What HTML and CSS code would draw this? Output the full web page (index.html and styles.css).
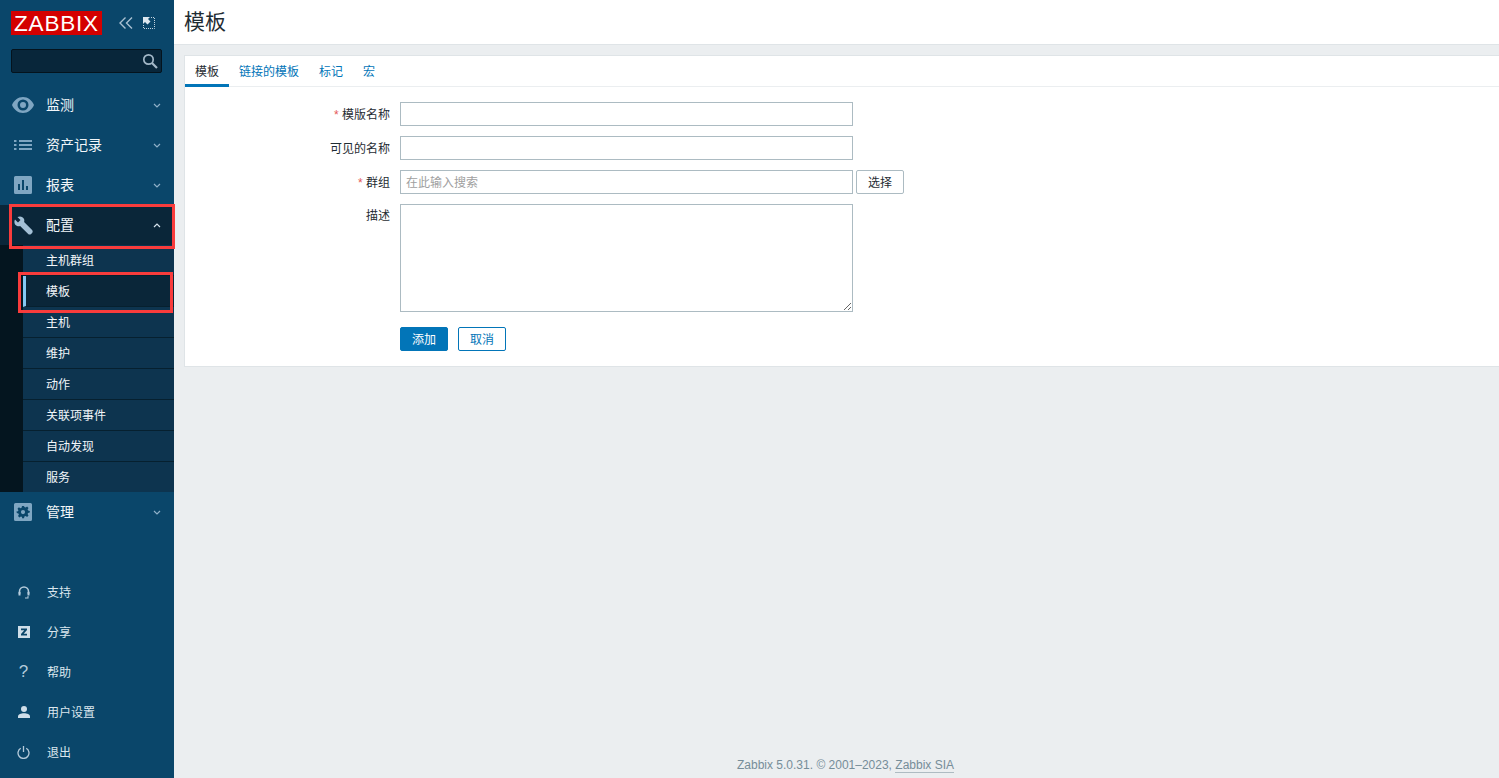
FILE: index.html
```html
<!DOCTYPE html>
<html lang="zh-CN">
<head>
<meta charset="utf-8">
<title>模板</title>
<link rel="stylesheet" href="styles.css">
</head>
<body>
<div class="app">
  <aside class="sidebar">
    <div class="brand">
      <span class="logo">ZABBIX</span>
      <svg class="ctl" width="14" height="12" viewBox="0 0 14 12"><path d="M6.500 .5 L1 6 L6.500 11.500 M13 .5 L7.500 6 L13 11.500" fill="none" stroke="#a9c0d2" stroke-width="1.400"/></svg>
      <svg class="ctl ctl2" width="12" height="12" viewBox="0 0 12 12"><path d="M0 0h7L5 2l2.500 2.500-3 3L2 5 0 7z" fill="#dde8f0"/><path d="M8 .5h3.500v11H.5V8" fill="none" stroke="#c3d4e0" stroke-dasharray="1 1"/></svg>
    </div>
    <div class="search">
      <svg width="16" height="16" viewBox="0 0 16 16"><circle cx="6.500" cy="6.500" r="4.700" fill="none" stroke="#a3b8c8" stroke-width="1.700"/><path d="M10 10l5 5" stroke="#a3b8c8" stroke-width="2.200"/></svg>
    </div>
    <nav class="menu">
      <a class="item">
        <span class="ico"><svg width="22" height="16" viewBox="0 0 22 16"><path fill-rule="evenodd" d="M11 0C6 0 2 3.300 0 8c2 4.700 6 8 11 8s9-3.300 11-8c-2-4.700-6-8-11-8zm0 2.500a5.500 5.500 0 1 1 0 11 5.500 5.500 0 0 1 0-11zm0 2.500a3 3 0 1 0 0 6 3 3 0 0 0 0-6z" fill="#7fa6c2"/></svg></span>
        <span class="lbl">监测</span><svg class="chev" width="8" height="5" viewBox="0 0 8 5"><path d="M1 1l3 3 3-3" fill="none" stroke="#8fb0c8" stroke-width="1.200"/></svg>
      </a>
      <a class="item">
        <span class="ico"><svg width="18" height="10" viewBox="0 0 18 10"><path d="M0 0h2.500v2H0zM5 0h13v2H5zM0 4h2.500v2H0zM5 4h13v2H5zM0 8h2.500v2H0zM5 8h13v2H5z" fill="#7fa6c2"/></svg></span>
        <span class="lbl">资产记录</span><svg class="chev" width="8" height="5" viewBox="0 0 8 5"><path d="M1 1l3 3 3-3" fill="none" stroke="#8fb0c8" stroke-width="1.200"/></svg>
      </a>
      <a class="item">
        <span class="ico"><svg width="18" height="18" viewBox="0 0 18 18"><path fill-rule="evenodd" d="M1.500 0h15A1.500 1.500 0 0 1 18 1.500v15a1.500 1.500 0 0 1-1.500 1.500h-15A1.500 1.500 0 0 1 0 16.500v-15A1.500 1.500 0 0 1 1.500 0zM4 8v6h2V8zm4-4v10h2V4zm4 6v4h2v-4z" fill="#7fa6c2"/></svg></span>
        <span class="lbl">报表</span><svg class="chev" width="8" height="5" viewBox="0 0 8 5"><path d="M1 1l3 3 3-3" fill="none" stroke="#8fb0c8" stroke-width="1.200"/></svg>
      </a>
      <div class="group">
        <a class="item open">
          <span class="ico"><svg width="19" height="19" viewBox="0 0 19 19"><path d="M1 3.500L4 6.500 6.500 4 3.500 1C6 -.3 9 .5 10 3c.4 1 .4 2 .1 3l8 8.100c.8.800.8 2 0 2.900l-1 1c-.9.800-2.100.800-2.900 0l-8.100-8c-1 .3-2 .3-3-.1C.5 9 -.3 6 1 3.500z" fill="#a3c0d6"/></svg></span>
          <span class="lbl">配置</span><svg class="chev" width="8" height="5" viewBox="0 0 8 5"><path d="M1 4l3-3 3 3" fill="none" stroke="#d5e2ec" stroke-width="1.200"/></svg>
        </a>
        <div class="sub">
          <a class="subitem">主机群组</a>
          <a class="subitem current">模板</a>
          <a class="subitem">主机</a>
          <a class="subitem">维护</a>
          <a class="subitem">动作</a>
          <a class="subitem">关联项事件</a>
          <a class="subitem">自动发现</a>
          <a class="subitem">服务</a>
        </div>
      </div>
      <a class="item">
        <span class="ico"><svg width="18" height="18" viewBox="0 0 18 18"><path fill-rule="evenodd" d="M1.500 0h15A1.500 1.500 0 0 1 18 1.500v15a1.500 1.500 0 0 1-1.500 1.500h-15A1.500 1.500 0 0 1 0 16.500v-15A1.500 1.500 0 0 1 1.500 0zM8 3l-.4 1.700-1.200.5-1.500-.9-1.400 1.400.9 1.500-.5 1.200L2.700 8v2l1.700.4.5 1.200-.9 1.500 1.400 1.400 1.500-.9 1.200.5L8 15.300h2l.4-1.700 1.200-.5 1.500.9 1.400-1.400-.9-1.500.5-1.200 1.700-.4V8l-1.700-.4-.5-1.200.9-1.500-1.400-1.400-1.500.9-1.200-.5L10 3zm1 4a2.100 2.100 0 1 1 0 4.200A2.100 2.100 0 0 1 9 7z" fill="#7fa6c2"/></svg></span>
        <span class="lbl">管理</span><svg class="chev" width="8" height="5" viewBox="0 0 8 5"><path d="M1 1l3 3 3-3" fill="none" stroke="#8fb0c8" stroke-width="1.200"/></svg>
      </a>
    </nav>
    <nav class="bottom">
      <a class="bitem"><span class="bico"><svg width="12" height="13" viewBox="0 0 12 13"><path d="M1.500 8V5.500a4.500 4.500 0 0 1 9 0V8" fill="none" stroke="#b5cbdb" stroke-width="1.600"/><path d="M.5 6h2v3.500h-2zM9.500 6h2v3.500h-2zM7 11.500h2.500V10h1v2.500H7z" fill="#b5cbdb"/></svg></span><span class="btxt">支持</span></a>
      <a class="bitem"><span class="bico"><svg width="12" height="12" viewBox="0 0 12 12"><path fill-rule="evenodd" d="M0 0h12v12H0zM3 2.500v1.700h3.300L3 8v1.500h6V7.800H5.700L9 4V2.500z" fill="#cfdee9"/></svg></span><span class="btxt">分享</span></a>
      <a class="bitem"><span class="bico q">?</span><span class="btxt">帮助</span></a>
      <a class="bitem"><span class="bico"><svg width="12" height="12" viewBox="0 0 12 12"><circle cx="6" cy="3" r="3" fill="#cfdee9"/><path d="M0 12V10.500C0 8.500 3 7.300 6 7.300s6 1.200 6 3.200V12z" fill="#cfdee9"/></svg></span><span class="btxt">用户设置</span></a>
      <a class="bitem"><span class="bico"><svg width="13" height="13" viewBox="0 0 13 13"><path d="M3.700 2.200a5.500 5.500 0 1 0 5.600 0" fill="none" stroke="#b5cbdb" stroke-width="1.300"/><path d="M6.500 0v6" stroke="#b5cbdb" stroke-width="1.300"/></svg></span><span class="btxt">退出</span></a>
    </nav>
  </aside>
  <main class="main">
    <header class="head"><h1>模板</h1></header>
    <section class="panel">
      <div class="tabs">
        <a class="tab active">模板</a>
        <a class="tab">链接的模板</a>
        <a class="tab">标记</a>
        <a class="tab">宏</a>
      </div>
      <form class="form">
        <label class="lab"><i>*</i> 模版名称</label>
        <input class="field" type="text">
        <label class="lab">可见的名称</label>
        <input class="field" type="text">
        <label class="lab"><i>*</i> 群组</label>
        <div class="combo"><input class="field" type="text" placeholder="在此输入搜索"><button class="pick" type="button">选择</button></div>
        <label class="lab">描述</label>
        <textarea class="area"></textarea>
        <div class="actions"><button class="btn primary" type="button">添加</button><button class="btn ghost" type="button">取消</button></div>
      </form>
    </section>
    <footer class="foot">Zabbix 5.0.31. © 2001–2023, <a>Zabbix SIA</a></footer>
  </main>
</div>
<div class="mark mark1"></div>
<div class="mark mark2"></div>
</body>
</html>
```
FILE: styles.css
```css
* { box-sizing: border-box; }
html, body { margin: 0; height: 100%; overflow: hidden; }
body { font: 12px/14px "Liberation Sans", "Noto Sans CJK SC", sans-serif; color: #1f2c33; background: #ebeef0; position: relative; }
.app { display: flex; height: 778px; }

.sidebar { width: 174px; flex: none; background: #0a466a; display: flex; flex-direction: column; color: #f2f6f9; }
.brand { height: 49px; padding: 11px 0 0 11px; display: flex; align-items: flex-start; }
.logo { width: 91px; height: 24px; background: #d40000; color: #fff; font-size: 22.500px; line-height: 25px; text-align: center; letter-spacing: .8px; font-weight: 400; }
.ctl { margin: 6px 0 0 17px; }
.ctl2 { margin-left: 10px; }
.search { margin-left: 11px; width: 151px; height: 24px; background: #08263a; border: 1px solid #04131d; border-radius: 2px; display: flex; justify-content: flex-end; align-items: center; padding-right: 3px; }
.menu { margin-top: 12px; }
.item { height: 40px; display: flex; align-items: center; font-size: 14px; }
.ico { width: 46px; display: flex; justify-content: center; flex: none; }
.lbl { flex: 1; }
.chev { margin-right: 13px; }
.group { background: #04151f; }
.item.open { background: #0a2639; }
.sub { margin-left: 23px; background: #0d344f; }
.subitem { display: block; height: 31px; line-height: 32px; padding-left: 23px; border-bottom: 1px solid #06202f; color: #f2f6f9; }
.subitem:last-child { border-bottom: 0; height: 30px; }
.subitem.current { background: #0a2639; border-left: 3px solid #85c8f2; padding-left: 20px; }
.bottom { margin-top: auto; padding-bottom: 6px; }
.bitem { height: 40px; display: flex; align-items: center; color: #dbe6ee; }
.bico { width: 47px; display: flex; justify-content: center; flex: none; }
.btxt { padding-top: 2px; }
.q { font-size: 17px; line-height: 18px; color: #b5cbdb; }

.main { flex: 1; min-width: 0; display: flex; flex-direction: column; }
.head { height: 45px; background: #fff; border-bottom: 1px solid #dfe4e7; padding: 0 10px; display: flex; align-items: center; flex: none; }
.head h1 { margin: 0; font-size: 21px; font-weight: 400; line-height: 24px; color: #1f2c33; }
.panel { margin: 10px 0 0 10px; height: 312px; background: #fff; border: 1px solid #dfe4e7; border-right: 0; flex: none; }
.tabs { height: 31px; border-bottom: 1px solid #ebeef0; display: flex; }
.tab { height: 31px; padding: 0 10px; line-height: 32px; color: #0275b8; }
.tab.active { color: #1f2c33; border-bottom: 3px solid #0275b8; }
.form { display: grid; grid-template-columns: 205px 453px; column-gap: 10px; row-gap: 10px; padding-top: 15px; align-items: start; }
.lab { text-align: right; line-height: 22px; padding-top: 2px; color: #1f2c33; }
.lab:nth-of-type(4) { line-height: 21px; padding-top: 2px; }
.lab i { color: #e45959; font-style: normal; }
.field { display: block; width: 453px; height: 24px; border: 1px solid #acbbc2; background: #fff; padding: 1px 5px 0; font: inherit; margin: 0; outline: 0; }
.field::placeholder { color: #a0a0a0; opacity: 1; }
.combo { display: flex; width: 700px; }
.pick { margin: 0 0 0 3px; width: 48px; height: 24px; background: #fff; border: 1px solid #acbbc2; border-radius: 2px; font: inherit; color: #1f2c33; padding: 1px 0 0; }
.area { display: block; width: 453px; height: 108px; border: 1px solid #acbbc2; background: #fff; padding: 3px 5px; font: inherit; margin: 0; outline: 0; }
.actions { grid-column: 2; display: flex; gap: 10px; margin-top: 5px; }
.btn { width: 48px; height: 24px; border-radius: 2px; font: inherit; padding: 1px 0 0; margin: 0; border: 1px solid #0275b8; }
.primary { background: #0275b8; color: #fff; }
.ghost { background: #fff; color: #0275b8; }
.foot { margin-top: auto; height: 26px; padding: 6px 0 0 18px; text-align: center; color: #768d99; }
.foot a { border-bottom: 1px solid #aebbc2; }

.mark { position: absolute; border: 3px solid #f93c3c; pointer-events: none; }
.mark1 { left: 9px; top: 204px; width: 166px; height: 45px; }
.mark2 { left: 18px; top: 272px; width: 155px; height: 41px; }
```
